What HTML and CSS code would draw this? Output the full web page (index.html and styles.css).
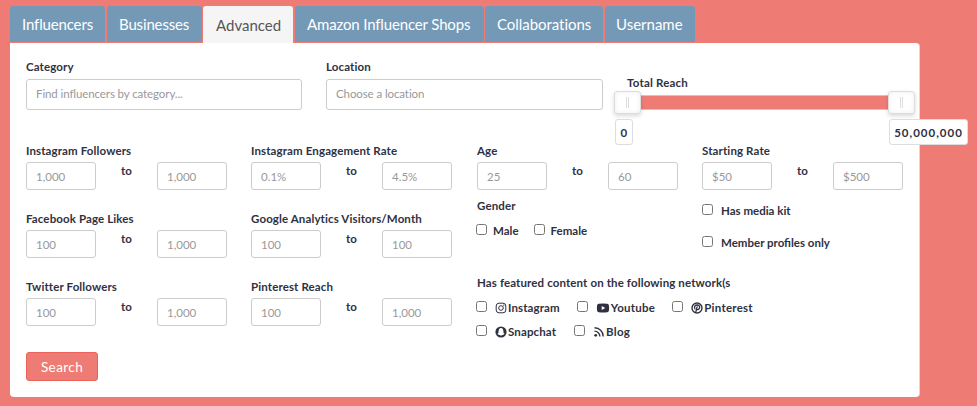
FILE: index.html
```html
<!DOCTYPE html>
<html lang="en">
<head>
    <meta charset="UTF-8">
    <meta name="viewport" content="width=device-width, initial-scale=1.0">
    <title>Influencer Search</title>
    <link rel="stylesheet" href="styles.css">
</head>
<body>
    <ul class="tabs">
        <li><a class="tab tab-influencers">Influencers</a></li>
        <li><a class="tab tab-businesses">Businesses</a></li>
        <li><a class="tab tab-advanced active">Advanced</a></li>
        <li><a class="tab tab-shops">Amazon Influencer Shops</a></li>
        <li><a class="tab tab-collab">Collaborations</a></li>
        <li><a class="tab tab-username">Username</a></li>
    </ul>

    <form class="panel">
        <div class="top-row">
            <div class="field">
                <label>Category</label>
                <input type="text" class="control large" placeholder="Find influencers by category...">
            </div>
            <div class="field">
                <label>Location</label>
                <input type="text" class="control large" placeholder="Choose a location">
            </div>
            <div class="field reach">
                <label>Total Reach</label>
                <div class="slider">
                    <span class="handle handle-min"></span>
                    <span class="handle handle-max"></span>
                    <span class="tip tip-min">0</span>
                    <span class="tip tip-max">50,000,000</span>
                </div>
            </div>
        </div>

        <div class="filters">
            <div class="column">
                <div class="field">
                    <label>Instagram Followers</label>
                    <div class="range"><input class="control" placeholder="1,000"><span>to</span><input class="control" placeholder="1,000"></div>
                </div>
                <div class="field">
                    <label>Facebook Page Likes</label>
                    <div class="range"><input class="control" placeholder="100"><span>to</span><input class="control" placeholder="1,000"></div>
                </div>
                <div class="field">
                    <label>Twitter Followers</label>
                    <div class="range"><input class="control" placeholder="100"><span>to</span><input class="control" placeholder="1,000"></div>
                </div>
            </div>

            <div class="column">
                <div class="field">
                    <label>Instagram Engagement Rate</label>
                    <div class="range"><input class="control" placeholder="0.1%"><span>to</span><input class="control" placeholder="4.5%"></div>
                </div>
                <div class="field">
                    <label>Google Analytics Visitors/Month</label>
                    <div class="range"><input class="control" placeholder="100"><span>to</span><input class="control" placeholder="100"></div>
                </div>
                <div class="field">
                    <label>Pinterest Reach</label>
                    <div class="range"><input class="control" placeholder="100"><span>to</span><input class="control" placeholder="1,000"></div>
                </div>
            </div>

            <div class="wide">
                <div class="pair">
                    <div>
                        <div class="field">
                            <label>Age</label>
                            <div class="range"><input class="control" placeholder="25"><span>to</span><input class="control" placeholder="60"></div>
                        </div>
                        <div class="gender">
                            <label>Gender</label>
                            <div class="checks">
                                <label class="check"><input type="checkbox">Male</label>
                                <label class="check"><input type="checkbox">Female</label>
                            </div>
                        </div>
                    </div>
                    <div>
                        <div class="field">
                            <label>Starting Rate</label>
                            <div class="range"><input class="control" placeholder="$50"><span>to</span><input class="control" placeholder="$500"></div>
                        </div>
                        <div class="options">
                            <label class="check"><input type="checkbox">Has media kit</label>
                            <label class="check"><input type="checkbox">Member profiles only</label>
                        </div>
                    </div>
                </div>

                <div class="networks">
                    <label>Has featured content on the following network(s</label>
                    <div class="network-row">
                        <label class="check">
                            <input type="checkbox">
                            <svg class="icon" viewBox="0 0 12 12" fill="none" stroke="currentColor"><rect x="1.2" y="1.2" width="9.6" height="9.6" rx="2.8"/><circle cx="6" cy="6" r="2.3"/><circle cx="8.8" cy="3.2" r=".6" fill="currentColor" stroke="none"/></svg>
                            Instagram
                        </label>
                        <label class="check">
                            <input type="checkbox">
                            <svg class="icon icon-wide" viewBox="0 0 13 12"><path fill="currentColor" fill-rule="evenodd" d="M2.2 1.8Q6.5 1.3 10.8 1.8Q12.2 2 12.4 3.3Q12.8 6 12.4 8.7Q12.2 10 10.8 10.2Q6.5 10.7 2.2 10.2Q.8 10 .6 8.7Q.2 6 .6 3.3Q.8 2 2.2 1.8ZM5.2 4V8L8.8 6Z"/></svg>
                            Youtube
                        </label>
                        <label class="check">
                            <input type="checkbox">
                            <svg class="icon" viewBox="0 0 12 12" fill="none" stroke="currentColor" stroke-linecap="round"><circle cx="6" cy="6" r="5" stroke-width="1.4"/><path stroke-width="1.3" d="M3.9 6.8C2.8 4.7 4.1 3 6.1 3C8.1 3 9 4.3 8.5 6C8 7.9 6.2 8 5.6 7M6.1 4.8L4.8 10.1"/></svg>
                            Pinterest
                        </label>
                    </div>
                    <div class="network-row">
                        <label class="check">
                            <input type="checkbox">
                            <svg class="icon" viewBox="0 0 12 12"><path fill="currentColor" fill-rule="evenodd" d="M6 .4A5.6 5.6 0 1 1 6 11.6A5.6 5.6 0 1 1 6 .4ZM6 2C4.5 2 3.8 3 3.8 4.3L3.7 5.5L3.1 5.6L3.7 6.3Q3.4 7.4 2.3 8L3.5 8.5L3.8 9L4.7 8.9L6 9.7L7.3 8.9L8.2 9L8.5 8.5L9.7 8Q8.6 7.4 8.3 6.3L8.9 5.6L8.3 5.5L8.2 4.3C8.2 3 7.5 2 6 2Z"/></svg>
                            Snapchat
                        </label>
                        <label class="check">
                            <input type="checkbox">
                            <svg class="icon" viewBox="0 0 12 12" fill="none" stroke="currentColor" stroke-width="1.4"><path d="M1.5 5.1A5.4 5.4 0 0 1 6.9 10.5M1.5 1.8A8.7 8.7 0 0 1 10.2 10.5"/><circle cx="2.7" cy="9.3" r="1.4" fill="currentColor" stroke="none"/></svg>
                            Blog
                        </label>
                    </div>
                </div>
            </div>
        </div>

        <button type="button" class="search">Search</button>
    </form>
</body>
</html>
```

FILE: styles.css
```css
* {
    box-sizing: border-box;
}
body {
    margin: 0;
    padding: 6px 0 0 10px;
    height: 406px;
    overflow: hidden;
    background: #ee7c75;
    color: #2f3142;
    font-family: Lato, "Liberation Sans", sans-serif;
    font-size: 11.5px;
    font-weight: 700;
    letter-spacing: 0.12px;
}
.tabs {
    display: flex;
    gap: 1px;
    height: 37px;
    margin: 0;
    padding: 0;
    list-style: none;
}
.tab {
    display: block;
    height: 36px;
    padding-left: 12px;
    border-radius: 3px 3px 0 0;
    background: #7399b7;
    color: #fff;
    font-size: 15px;
    font-weight: 400;
    letter-spacing: -0.15px;
    line-height: 36px;
    white-space: nowrap;
}
.tab.active {
    height: 37px;
    padding-left: 13px;
    background: #f5f5f5;
    color: #555;
    letter-spacing: 0;
    line-height: 38px;
}
.tab-influencers {
    width: 95px;
    margin-right: 1px;
}
.tab-businesses {
    width: 95px;
}
.tab-advanced {
    width: 90px;
}
.tab-shops {
    width: 189px;
    margin-left: 1px;
}
.tab-collab {
    width: 118px;
    letter-spacing: -0.05px;
}
.tab-username {
    width: 90px;
    margin-left: 1px;
    padding-left: 11px;
    letter-spacing: 0;
}
.panel {
    width: 910px;
    height: 354px;
    padding: 16px 17px 0 16px;
    border-right: 1px solid #f3cfcc;
    border-radius: 0 4px 4px 4px;
    background: #fff;
}
label {
    display: block;
    line-height: 16px;
    white-space: nowrap;
}
.top-row {
    display: grid;
    grid-template-columns: 276px 277px 276px;
    gap: 24px;
    height: 83px;
}
.control {
    display: block;
    width: 70px;
    height: 28px;
    margin: 0;
    padding: 1px 9px 0;
    border: 1px solid #ccc;
    border-radius: 3px;
    background: #fff;
    font-family: inherit;
    font-size: 11.5px;
    font-weight: 400;
}
.control::placeholder {
    color: #999;
    opacity: 1;
}
.control.large {
    width: 100%;
    height: 31px;
    margin-top: 4px;
    padding: 0 9px 2px;
    letter-spacing: -0.1px;
}
.reach {
    padding-top: 16px;
}
.reach label {
    letter-spacing: 0.2px;
}
.slider {
    position: relative;
    width: 276px;
    height: 15px;
    margin: 4px 0 0 -2px;
    border: 1px solid #d5c4c3;
    background: #ee7c75;
}
.handle {
    position: absolute;
    top: -5px;
    width: 27px;
    height: 23px;
    border: 1px solid #ddd;
    border-radius: 3px;
    background: linear-gradient(#ddd, #ddd) 11px 5px / 1px 11px no-repeat, linear-gradient(#ddd, #ddd) 13px 5px / 1px 11px no-repeat, #fff;
    box-shadow: inset 0 0 5px #eee, 0 2px 4px rgba(0, 0, 0, 0.15);
}
.handle-min {
    left: -12px;
}
.handle-max {
    right: -15px;
}
.tip {
    position: absolute;
    top: 23px;
    height: 26px;
    border: 1px solid #ddd;
    border-radius: 3px;
    background: #fff;
    line-height: 25px;
    text-align: center;
}
.tip-min {
    left: -11px;
    width: 18px;
}
.tip-max {
    left: 263px;
    width: 79px;
    letter-spacing: 1px;
}
.filters {
    display: grid;
    grid-template-columns: 201px 201px 427px;
    gap: 24px;
    height: 210px;
}
.filters .field > label {
    position: relative;
    top: 1px;
}
.column .field {
    height: 68px;
}
.range {
    display: flex;
    justify-content: space-between;
    margin-top: 4px;
}
.range span {
    line-height: 17px;
}
.wide {
    padding-left: 1px;
}
.pair {
    display: grid;
    grid-template-columns: 201px 201px;
    gap: 24px;
    height: 133px;
}
.gender {
    margin-top: 8px;
}
.checks {
    display: flex;
    gap: 15px;
    margin-top: 9px;
}
.check {
    display: flex;
    align-items: center;
}
.check input {
    width: 11px;
    height: 11px;
    margin: 0 6px 3px 0;
}
.checks .check,
.options .check {
    letter-spacing: 0;
}
.options {
    margin-top: 13px;
}
.options .check {
    height: 32px;
    align-items: flex-start;
}
.options .check input {
    margin: 1px 8px 0 0;
}
.network-row,
.checks {
    margin-left: -1px;
}
.network-row {
    display: flex;
    gap: 17px;
    margin-top: 8px;
}
.networks > label + .network-row {
    margin-top: 9px;
}
.network-row .check + .check {
    letter-spacing: 0.25px;
}
.network-row .check input {
    margin-right: 8px;
}
.network-row + .network-row {
    gap: 18px;
}
.icon {
    width: 12px;
    height: 12px;
    margin-right: 1px;
}
.icon-wide {
    width: 14px;
}
.search {
    width: 72px;
    height: 29px;
    padding: 0;
    border: 1px solid #ec625a;
    border-radius: 3px;
    background: #ee7c75;
    color: #fff;
    font-family: inherit;
    font-size: 13.5px;
    letter-spacing: 0.4px;
}
```
